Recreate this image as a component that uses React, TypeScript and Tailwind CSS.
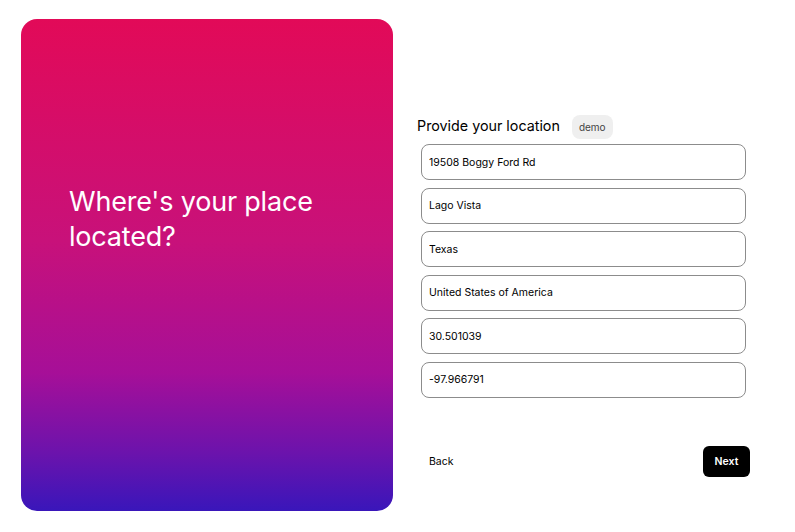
import React, { useState } from 'react';

const fields = [
  '19508 Boggy Ford Rd',
  'Lago Vista',
  'Texas',
  'United States of America',
  '30.501039',
  '-97.966791',
];

export default function App() {
  const [values, setValues] = useState(fields);

  return (
    <div className="flex min-h-[532px] w-full bg-white pl-[21px] pt-[19px] font-['Inter',sans-serif] text-black">
      {/* left hero card */}
      <div className="h-[492px] w-[372px] shrink-0 rounded-2xl bg-[linear-gradient(180deg,#e20a58_0%,#c8117a_45%,#a60f98_72%,#6c13ac_88%,#3916ba_100%)] px-12 pt-[165px]">
        <h1 className="text-[27px] leading-[35px] font-normal tracking-[-0.2px] text-white">
          Where's your place
          <br />
          located?
        </h1>
      </div>

      {/* form */}
      <div className="ml-6 flex w-[333px] flex-col pt-[96px]">
        <div className="flex h-6 items-center gap-3">
          <h2 className="-mt-[3px] text-[14.3px] leading-5">Provide your location</h2>
          <span className="rounded-lg bg-[#efefef] px-[7px] py-[5px] text-[10px] leading-[14px] text-[#444]">
            demo
          </span>
        </div>

        <div className="mx-1 mt-[5px] flex flex-col gap-[7.5px]">
          {values.map((v, i) => (
            <input
              key={i}
              value={v}
              onChange={(e) => {
                const next = [...values];
                next[i] = e.target.value;
                setValues(next);
              }}
              className="h-9 w-full rounded-lg border border-[#8c8c8c] px-[7px] text-[10.5px] text-black outline-none"
            />
          ))}
        </div>

        <div className="mt-12 flex items-center justify-between">
          <button className="px-3 py-2 text-[10.5px] text-black">Back</button>
          <button className="h-[31px] w-[47px] rounded-md bg-black text-[10.5px] font-semibold text-white">
            Next
          </button>
        </div>
      </div>
    </div>
  );
}
